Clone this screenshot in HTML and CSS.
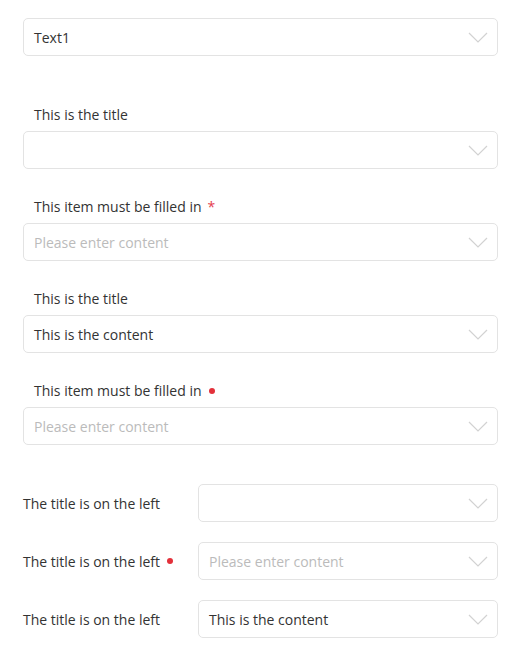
FILE: index.html
```html
<!DOCTYPE html>
<html>
<head>
<meta charset="utf-8">
<link rel="stylesheet" href="styles.css">
</head>
<body>
<div class="form">
  <div class="item first">
    <div class="select"><span class="value">Text1</span><svg class="chev" viewBox="0 0 20 11"><path d="M1 1 L10 10 L19 1"/></svg></div>
  </div>

  <div class="item after-first">
    <div class="label">This is the title</div>
    <div class="select"><span class="value"></span><svg class="chev" viewBox="0 0 20 11"><path d="M1 1 L10 10 L19 1"/></svg></div>
  </div>

  <div class="item">
    <div class="label">This item must be filled in <span class="star">*</span></div>
    <div class="select"><span class="value ph">Please enter content</span><svg class="chev" viewBox="0 0 20 11"><path d="M1 1 L10 10 L19 1"/></svg></div>
  </div>

  <div class="item">
    <div class="label">This is the title</div>
    <div class="select"><span class="value">This is the content</span><svg class="chev" viewBox="0 0 20 11"><path d="M1 1 L10 10 L19 1"/></svg></div>
  </div>

  <div class="item">
    <div class="label">This item must be filled in <span class="dot"></span></div>
    <div class="select"><span class="value ph">Please enter content</span><svg class="chev" viewBox="0 0 20 11"><path d="M1 1 L10 10 L19 1"/></svg></div>
  </div>

  <div class="row first-row">
    <div class="llabel">The title is on the left</div>
    <div class="select"><span class="value"></span><svg class="chev" viewBox="0 0 20 11"><path d="M1 1 L10 10 L19 1"/></svg></div>
  </div>

  <div class="row">
    <div class="llabel">The title is on the left <span class="dot"></span></div>
    <div class="select"><span class="value ph">Please enter content</span><svg class="chev" viewBox="0 0 20 11"><path d="M1 1 L10 10 L19 1"/></svg></div>
  </div>

  <div class="row">
    <div class="llabel">The title is on the left</div>
    <div class="select"><span class="value">This is the content</span><svg class="chev" viewBox="0 0 20 11"><path d="M1 1 L10 10 L19 1"/></svg></div>
  </div>
</div>
</body>
</html>
```

FILE: styles.css
```css
html, body {
  margin: 0;
  padding: 0;
  background: #fff;
}
body {
  font-family: "Open Sans", "Noto Sans", sans-serif;
  font-size: 14px;
  color: #333;
}
.form {
  padding: 18px 25px 0 23px;
}
.item {
  margin-top: 26px;
}
.item.first {
  margin-top: 0;
}
.item.after-first {
  margin-top: 47px;
}
.label {
  height: 24px;
  line-height: 24px;
  padding-left: 11px;
  margin-bottom: 4px;
  display: flex;
  align-items: center;
  gap: 4px;
}
.star {
  color: #e43d4d;
  margin-left: 2px;
}
.dot {
  display: inline-block;
  width: 6px;
  height: 6px;
  border-radius: 50%;
  background: #e3303a;
  margin-left: 3px;
}
.select {
  height: 38px;
  box-sizing: border-box;
  border: 1px solid #e3e3e3;
  border-radius: 5px;
  display: flex;
  align-items: center;
  padding: 0 9px 0 10px;
  flex: 1;
}
.value {
  flex: 1;
  white-space: nowrap;
}
.value.ph {
  color: #bbb;
}
.chev {
  width: 20px;
  height: 11px;
  fill: none;
  stroke: #d2d2d2;
  stroke-width: 1.2;
}
.row {
  display: flex;
  align-items: center;
  margin-top: 20px;
}
.row.first-row {
  margin-top: 39px;
}
.llabel {
  width: 175px;
  display: flex;
  align-items: center;
  gap: 4px;
}
```
